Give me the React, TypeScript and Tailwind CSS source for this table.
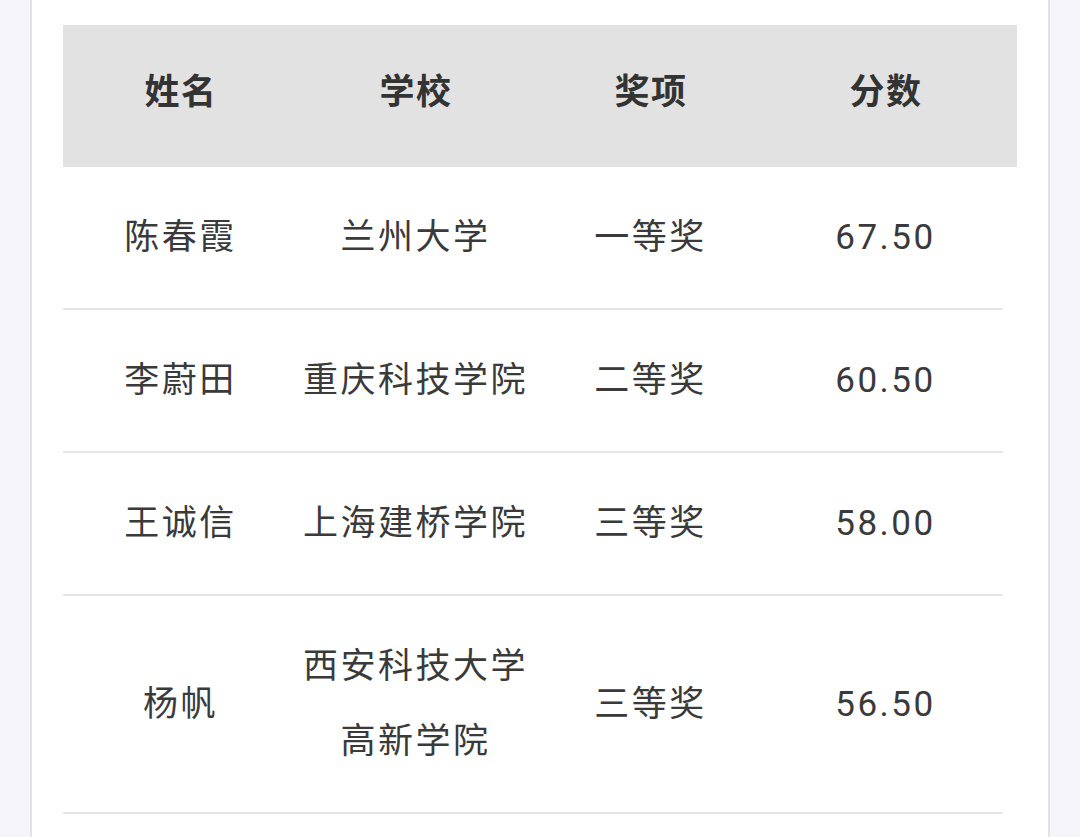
import React from "react";

const rows: { name: string; school: string[]; award: string; score: string }[] = [
  { name: "陈春霞", school: ["兰州大学"], award: "一等奖", score: "67.50" },
  { name: "李蔚田", school: ["重庆科技学院"], award: "二等奖", score: "60.50" },
  { name: "王诚信", school: ["上海建桥学院"], award: "三等奖", score: "58.00" },
  { name: "杨帆", school: ["西安科技大学", "高新学院"], award: "三等奖", score: "56.50" },
];

export default function App() {
  return (
    <div
      className="w-[1080px] h-[837px] overflow-hidden bg-[#f5f5f9]"
      style={{ fontFamily: 'Roboto, "Noto Sans CJK SC", sans-serif' }}
    >
      <div className="ml-[30px] w-[1020px] h-full bg-white border-x-2 border-[#e2e2e7] pt-[25px] pl-[31px]">
        <div className="w-[954px] h-[142px] bg-[#e2e2e2] flex items-center">
          {["姓名", "学校", "奖项", "分数"].map((h) => (
            <div
              key={h}
              className="w-[235px] text-center text-[35px] font-bold text-[#333333] tracking-[1.5px] pb-[6px] pl-[1px]"
            >
              {h}
            </div>
          ))}
        </div>
        <div className="w-[940px]">
          {rows.map((r) => (
            <div
              key={r.name}
              className="flex items-center py-[33px] border-b-2 border-[#e6e6e6] text-[35px] text-[#3a3a3a] tracking-[2.5px] leading-[75px]"
            >
              <div className="w-[235px] text-center">{r.name}</div>
              <div className="w-[235px] text-center">
                {r.school.map((s) => (
                  <div key={s}>{s}</div>
                ))}
              </div>
              <div className="w-[235px] text-center">{r.award}</div>
              <div className="w-[235px] text-center">{r.score}</div>
            </div>
          ))}
        </div>
      </div>
    </div>
  );
}
